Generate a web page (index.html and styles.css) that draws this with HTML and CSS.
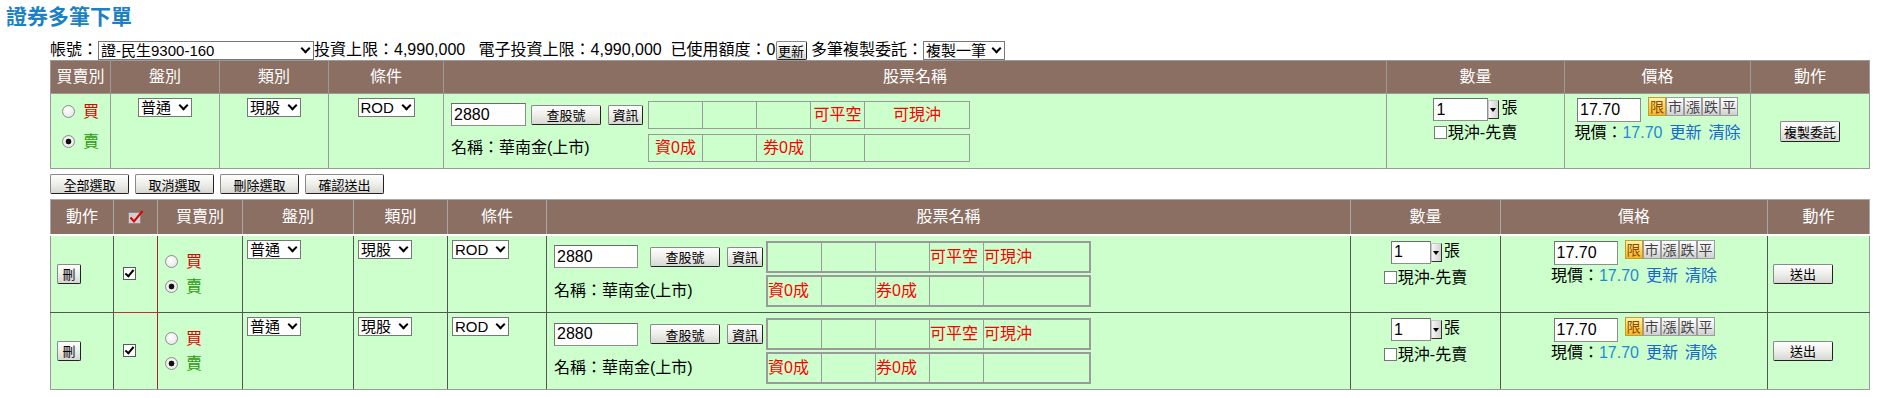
FILE: index.html
```html
<!DOCTYPE html>
<html lang="zh-Hant">
<head>
    <meta charset="UTF-8">
    <meta name="viewport" content="width=device-width, initial-scale=1.0">
    <title>證券多筆下單</title>
    <link rel="stylesheet" href="styles.css">
</head>
<body>
    <h1 class="page-title">證券多筆下單</h1>

    <!-- 帳號與額度 -->
    <div class="toolbar">
        帳號：<span class="selwrap"><select class="sel sel-account"><option>證-民生9300-160</option></select></span>投資上限：4,990,000&nbsp;&nbsp;&nbsp;電子投資上限：4,990,000&nbsp;&nbsp;已使用額度：0<button class="btn btn-refresh">更新</button>&nbsp;多筆複製委託：<span class="selwrap"><select class="sel sel-copy"><option>複製一筆</option></select></span>
    </div>

    <!-- 輸入列 -->
    <table class="grid entry">
        <colgroup>
            <col class="c-side"><col class="c-board"><col class="c-kind"><col class="c-cond">
            <col class="c-stock"><col class="c-qty"><col class="c-price"><col class="c-op">
        </colgroup>
        <thead>
            <tr>
                <th>買賣別</th><th>盤別</th><th>類別</th><th>條件</th>
                <th>股票名稱</th><th>數量</th><th>價格</th><th>動作</th>
            </tr>
        </thead>
        <tbody>
            <tr>
                <td class="side">
                    <label class="opt"><input type="radio" class="radio" name="side0"><span class="buy">買</span></label>
                    <label class="opt"><input type="radio" class="radio" name="side0" checked><span class="sell">賣</span></label>
                </td>
                <td class="pickcell"><span class="selwrap"><select class="sel sel-board"><option>普通</option></select></span></td>
                <td class="pickcell"><span class="selwrap"><select class="sel sel-kind"><option>現股</option></select></span></td>
                <td class="pickcell"><span class="selwrap"><select class="sel sel-cond"><option>ROD</option></select></span></td>
                <td class="stock-cell">
                    <div class="stock">
                        <div class="lookup"><input class="field code" value="2880"><button class="btn btn-find">查股號</button><button class="btn btn-info">資訊</button></div>
                        <table class="flags"><tr><td></td><td></td><td></td><td>可平空</td><td>可現沖</td></tr></table>
                        <div class="stock-name">名稱：華南金(上市)</div>
                        <table class="flags"><tr><td>資0成</td><td></td><td>券0成</td><td></td><td></td></tr></table>
                    </div>
                </td>
                <td class="qty-cell">
                    <div class="qty"><input class="field qty-input" value="1"><span class="qty-arrow"></span><span class="unit">張</span></div>
                    <label class="daytrade"><input type="checkbox" class="chk">現沖-先賣</label>
                </td>
                <td class="price-cell">
                    <div class="price"><input class="field price-input" value="17.70"><span class="ptypes"><button class="pbtn on">限</button><button class="pbtn">市</button><button class="pbtn">漲</button><button class="pbtn">跌</button><button class="pbtn">平</button></span></div>
                    <div class="quote">現價：<span class="last">17.70</span><a class="lnk" href="#">更新</a><a class="lnk" href="#">清除</a></div>
                </td>
                <td class="op-cell"><button class="btn btn-copy">複製委託</button></td>
            </tr>
        </tbody>
    </table>

    <div class="bulk">
        <button class="btn">全部選取</button>
        <button class="btn">取消選取</button>
        <button class="btn">刪除選取</button>
        <button class="btn">確認送出</button>
    </div>

    <!-- 委託清單 -->
    <table class="grid orders">
        <colgroup>
            <col class="c-del"><col class="c-pick"><col class="c-side"><col class="c-board"><col class="c-kind">
            <col class="c-cond"><col class="c-stock"><col class="c-qty"><col class="c-price"><col class="c-op">
        </colgroup>
        <thead>
            <tr>
                <th>動作</th>
                <th><svg class="all-check" width="16" height="14" viewBox="0 0 16 14"><rect x="0.5" y="2.5" width="12" height="11" fill="#cfcfcf" stroke="#8a8a8a"/><path d="M2.5 7.5 L6 11.5 L14.5 1" fill="none" stroke="#e00000" stroke-width="2"/></svg></th>
                <th>買賣別</th><th>盤別</th><th>類別</th><th>條件</th>
                <th>股票名稱</th><th>數量</th><th>價格</th><th>動作</th>
            </tr>
        </thead>
        <tbody>
            <tr>
                <td class="del-cell"><button class="btn btn-del">刪</button></td>
                <td class="pick"><input type="checkbox" class="chk" checked></td>
                <td class="side">
                    <label class="opt"><input type="radio" class="radio" name="side1"><span class="buy">買</span></label>
                    <label class="opt"><input type="radio" class="radio" name="side1" checked><span class="sell">賣</span></label>
                </td>
                <td class="pickcell"><span class="selwrap"><select class="sel sel-board"><option>普通</option></select></span></td>
                <td class="pickcell"><span class="selwrap"><select class="sel sel-kind"><option>現股</option></select></span></td>
                <td class="pickcell"><span class="selwrap"><select class="sel sel-cond"><option>ROD</option></select></span></td>
                <td class="stock-cell">
                    <div class="stock">
                        <div class="lookup"><input class="field code" value="2880"><button class="btn btn-find">查股號</button><button class="btn btn-info">資訊</button></div>
                        <table class="flags"><tr><td></td><td></td><td></td><td>可平空</td><td>可現沖</td></tr></table>
                        <div class="stock-name">名稱：華南金(上市)</div>
                        <table class="flags"><tr><td>資0成</td><td></td><td>券0成</td><td></td><td></td></tr></table>
                    </div>
                </td>
                <td class="qty-cell">
                    <div class="qty"><input class="field qty-input" value="1"><span class="qty-arrow"></span><span class="unit">張</span></div>
                    <label class="daytrade"><input type="checkbox" class="chk">現沖-先賣</label>
                </td>
                <td class="price-cell">
                    <div class="price"><input class="field price-input" value="17.70"><span class="ptypes"><button class="pbtn on">限</button><button class="pbtn">市</button><button class="pbtn">漲</button><button class="pbtn">跌</button><button class="pbtn">平</button></span></div>
                    <div class="quote">現價：<span class="last">17.70</span><a class="lnk" href="#">更新</a><a class="lnk" href="#">清除</a></div>
                </td>
                <td class="op-cell"><button class="btn btn-send">送出</button></td>
            </tr>
            <tr>
                <td class="del-cell"><button class="btn btn-del">刪</button></td>
                <td class="pick"><input type="checkbox" class="chk" checked></td>
                <td class="side">
                    <label class="opt"><input type="radio" class="radio" name="side2"><span class="buy">買</span></label>
                    <label class="opt"><input type="radio" class="radio" name="side2" checked><span class="sell">賣</span></label>
                </td>
                <td class="pickcell"><span class="selwrap"><select class="sel sel-board"><option>普通</option></select></span></td>
                <td class="pickcell"><span class="selwrap"><select class="sel sel-kind"><option>現股</option></select></span></td>
                <td class="pickcell"><span class="selwrap"><select class="sel sel-cond"><option>ROD</option></select></span></td>
                <td class="stock-cell">
                    <div class="stock">
                        <div class="lookup"><input class="field code" value="2880"><button class="btn btn-find">查股號</button><button class="btn btn-info">資訊</button></div>
                        <table class="flags"><tr><td></td><td></td><td></td><td>可平空</td><td>可現沖</td></tr></table>
                        <div class="stock-name">名稱：華南金(上市)</div>
                        <table class="flags"><tr><td>資0成</td><td></td><td>券0成</td><td></td><td></td></tr></table>
                    </div>
                </td>
                <td class="qty-cell">
                    <div class="qty"><input class="field qty-input" value="1"><span class="qty-arrow"></span><span class="unit">張</span></div>
                    <label class="daytrade"><input type="checkbox" class="chk">現沖-先賣</label>
                </td>
                <td class="price-cell">
                    <div class="price"><input class="field price-input" value="17.70"><span class="ptypes"><button class="pbtn on">限</button><button class="pbtn">市</button><button class="pbtn">漲</button><button class="pbtn">跌</button><button class="pbtn">平</button></span></div>
                    <div class="quote">現價：<span class="last">17.70</span><a class="lnk" href="#">更新</a><a class="lnk" href="#">清除</a></div>
                </td>
                <td class="op-cell"><button class="btn btn-send">送出</button></td>
            </tr>
        </tbody>
    </table>
</body>
</html>
```

FILE: styles.css
```css
/* 基本設定 */
body {
    margin: 0;
    font-family: "Liberation Sans", "Noto Sans CJK TC", sans-serif;
    font-size: 16px;
    line-height: 20px;
    color: #000;
    background: #fff;
}

.page-title {
    margin: 0;
    height: 40px;
    box-sizing: border-box;
    padding: 5px 0 0 6px;
    font-size: 21px;
    line-height: 24px;
    font-weight: bold;
    color: #1b80c4;
}

/* 帳號列 */
.toolbar {
    display: flex;
    align-items: center;
    height: 20px;
    margin-left: 50px;
    white-space: nowrap;
}

/* 下拉選單 */
.selwrap {
    position: relative;
    display: inline-block;
    vertical-align: top;
}

.selwrap::after {
    content: "";
    position: absolute;
    right: 5px;
    top: 4px;
    width: 5px;
    height: 5px;
    border: solid #000;
    border-width: 0 2px 2px 0;
    transform: rotate(45deg);
    pointer-events: none;
}

.sel {
    display: block;
    appearance: none;
    height: 19px;
    box-sizing: border-box;
    margin: 0;
    padding: 0 14px 0 2px;
    border: 1px solid #777;
    border-radius: 0;
    background: #fff;
    font: 15px/17px "Liberation Sans", "Noto Sans CJK TC", sans-serif;
    color: #000;
}

.sel-account { width: 216px; }
.sel-copy { width: 82px; }
.sel-board { width: 54px; }
.sel-kind { width: 54px; }
.sel-cond { width: 57px; }

/* 按鈕 */
.btn {
    height: 20px;
    box-sizing: border-box;
    margin: 0;
    padding: 0;
    border: 1px solid #333;
    border-color: #8a8a8a #222 #222 #8a8a8a;
    border-radius: 2px;
    background: linear-gradient(#fefefe, #eeeeea 50%, #d6d6d2);
    font: 13px/17px "Noto Sans CJK TC", sans-serif;
    color: #000;
    cursor: pointer;
}

.btn-refresh { width: 31px; height: 19px; }
.btn-find { width: 70px; margin-left: 5px; }
.btn-info { width: 35px; margin-left: 7px; }
.btn-copy { width: 60px; height: 21px; }
.btn-send { width: 60px; }
.btn-del { width: 24px; }

.field {
    box-sizing: border-box;
    margin: 0;
    padding: 0 2px;
    border: 1px solid #8e8e8e;
    border-top-color: #6a6a6a;
    border-left-color: #7a7a7a;
    background: #fff;
    font: 16px "Liberation Sans", sans-serif;
    color: #000;
}

.radio {
    appearance: none;
    width: 13px;
    height: 13px;
    margin: 0 8px 0 0;
    border: 1px solid #8c8c8c;
    border-radius: 50%;
    background: radial-gradient(circle at 40% 35%, #fff, #e2e2e2);
    vertical-align: -1px;
}

.radio:checked {
    background: radial-gradient(circle, #111 0 2.6px, #f4f4f4 3.2px, #e2e2e2);
}

.chk {
    appearance: none;
    position: relative;
    width: 13px;
    height: 13px;
    margin: 0;
    border: 1px solid #5a5a5a;
    background: #fff;
    vertical-align: -1px;
}

.chk:checked::after {
    content: "";
    position: absolute;
    left: 3px;
    top: 0;
    width: 3px;
    height: 7px;
    border: solid #000;
    border-width: 0 2px 2px 0;
    transform: rotate(40deg);
}

/* 表格 */
.grid {
    margin-left: 50px;
    border-collapse: collapse;
    table-layout: fixed;
    width: 1819px;
    background: #ccffcc;
}

.grid > thead > tr > th {
    padding: 0;
    background: #8b6f63;
    color: #fff;
    font-weight: normal;
    font-size: 16px;
    border: 1px solid #9a9a9a;
}

.grid > tbody > tr > td {
    padding: 0;
    border: 1px solid #9a9a9a;
    vertical-align: top;
}

.entry > thead > tr { height: 33px; }
.entry > tbody > tr { height: 75px; }

.entry .c-side { width: 60px; }
.entry .c-board { width: 109px; }
.entry .c-kind { width: 109px; }
.entry .c-cond { width: 115px; }
.entry .c-stock { width: 943px; }
.entry .c-qty { width: 178px; }
.entry .c-price { width: 186px; }
.entry .c-op { width: 119px; }

.orders .c-del { width: 63px; }
.orders .c-pick { width: 44px; }
.orders .c-side { width: 85px; }
.orders .c-board { width: 111px; }
.orders .c-kind { width: 94px; }
.orders .c-cond { width: 99px; }
.orders .c-stock { width: 804px; }
.orders .c-qty { width: 150px; }
.orders .c-price { width: 267px; }
.orders .c-op { width: 102px; }

/* 買賣別 */
.grid td.side {
    text-align: center;
    padding-top: 3px;
}

.opt {
    display: block;
    height: 30px;
    line-height: 30px;
}

.buy { color: #e00000; }
.sell { color: #2f9a10; }

/* 盤別 / 類別 / 條件 */
.grid td.pickcell {
    text-align: center;
    padding-top: 4px;
}

.grid td.pickcell .selwrap { vertical-align: top; }

/* 股票名稱 */
.grid td.stock-cell {
    padding-left: 7px;
    vertical-align: middle;
}

.stock {
    display: grid;
    grid-template-columns: auto auto;
    justify-content: start;
    align-items: center;
    column-gap: 5px;
    row-gap: 5px;
}

.lookup {
    display: flex;
    align-items: center;
}

.code {
    width: 75px;
    height: 23px;
}

.stock-name { line-height: 20px; }

.flags {
    border-collapse: collapse;
    table-layout: fixed;
    width: 316px;
    border: 1px solid #9a9a9a;
    color: #ff0000;
}

.flags td {
    width: 53px;
    height: 26px;
    padding: 0;
    border: 1px solid #9a9a9a;
    text-align: center;
    vertical-align: middle;
    white-space: nowrap;
}

.flags td:last-child { width: 104px; }

/* 數量 */
.grid td.qty-cell {
    text-align: center;
    padding-top: 4px;
}

.qty {
    display: inline-flex;
    align-items: flex-start;
    height: 23px;
}

.qty-input {
    width: 55px;
    height: 23px;
}

.qty-arrow {
    position: relative;
    width: 11px;
    height: 19px;
    margin-top: 2px;
    box-sizing: border-box;
    border: 1px solid;
    border-color: #c8c8c8 #333 #333 #c8c8c8;
    background: linear-gradient(90deg, #f6f6f6, #d2d2d2);
}

.qty-arrow::after {
    content: "";
    position: absolute;
    left: 1px;
    top: 7px;
    border: 3.5px solid transparent;
    border-top: 4px solid #000;
    border-bottom: 0;
}

.unit {
    margin-left: 2px;
    line-height: 20px;
}

.daytrade {
    display: block;
    margin-top: 3px;
    line-height: 18px;
}

.daytrade .chk {
    border-color: #777;
    margin-right: 1px;
}

/* 價格 */
.grid td.price-cell {
    text-align: center;
    padding-top: 4px;
}

.price {
    display: inline-flex;
    align-items: flex-start;
}

.price-input {
    width: 64px;
    height: 24px;
}

.ptypes {
    display: inline-flex;
    margin-left: 7px;
    margin-top: -1px;
}

.pbtn {
    width: 18px;
    height: 19px;
    box-sizing: border-box;
    margin: 0;
    padding: 0;
    border: 1px solid #9c9c9c;
    background: linear-gradient(#ffffff, #e8e8e8 55%, #cfcfcf);
    font: 14px/17px "Noto Sans CJK TC", sans-serif;
    color: #444;
    cursor: pointer;
}

.pbtn.on {
    border-color: #c79a2c;
    background: linear-gradient(#fff3b0, #ffd452 55%, #f3b52a);
    color: #8a4a00;
}

.quote {
    margin-top: 1px;
    line-height: 20px;
    white-space: nowrap;
}

.last { color: #1d8ad6; }

.lnk {
    margin-left: 7px;
    color: #1668d0;
    text-decoration: none;
}

/* 動作 */
.grid td.op-cell {
    vertical-align: middle;
    text-align: center;
}

/* 批次按鈕 */
.bulk {
    display: flex;
    gap: 6px;
    margin: 5px 0 5px 50px;
}

.bulk .btn { width: 79px; }

/* 委託清單 */
.orders > thead > tr { height: 35px; }
.orders > tbody > tr { height: 78px; }
.orders > tbody > tr:last-child { height: 77px; }

.orders > thead > tr > th {
    border-color: #a8a8a8;
    border-bottom: 2px solid #fff;
}

.orders > tbody > tr > td { border-color: #555; }
.orders > tbody > tr:last-child > td { border-bottom-color: #9a9a9a; }
.orders > tbody > tr > td:first-child { border-left-color: #9a9a9a; }
.orders > tbody > tr > td:last-child { border-right-color: #9a9a9a; }

.grid td.del-cell {
    vertical-align: middle;
    padding-left: 6px;
}

.grid td.pick {
    vertical-align: middle;
    padding-left: 9px;
    border-right-color: #a02828;
}

.orders > tbody > tr:first-child > td.pick { border-bottom-color: #c03030; }

.all-check { display: block; margin: 0 auto; }

.orders td.side {
    text-align: left;
    vertical-align: middle;
    padding: 0 0 0 7px;
}

.orders .opt { height: 25px; line-height: 25px; }

.orders td.pickcell {
    text-align: left;
    padding: 4px 0 0 4px;
}

.orders .code { width: 84px; }
.orders .btn-find { margin-left: 12px; }
.orders .btn-info { width: 36px; }
.orders .stock { column-gap: 3px; row-gap: 2px; }
.orders .flags { width: 318px; border-width: 2px; }
.orders .flags td { height: 28px; text-align: left; }
.orders .flags td:last-child { width: 105px; }

.orders td.qty-cell { padding-top: 5px; }
.orders .qty-input { width: 40px; }
.orders .daytrade { margin-top: 5px; }

.orders td.price-cell { padding-top: 5px; }

.orders td.op-cell {
    text-align: left;
    padding-left: 5px;
}
```
